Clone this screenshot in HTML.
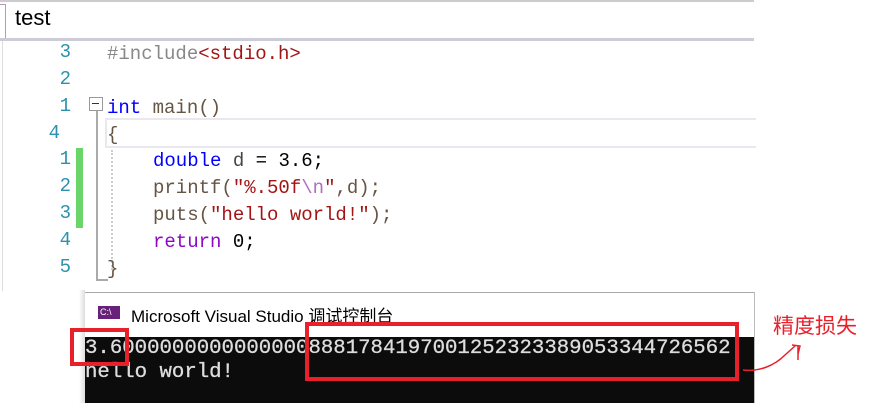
<!DOCTYPE html>
<html><head><meta charset="utf-8"><style>
body{margin:0;width:872px;height:403px;background:#fff;position:relative;overflow:hidden;font-family:"Liberation Mono","Noto Serif CJK SC",monospace}
.a{position:absolute;white-space:pre}
.code{font-size:19px;line-height:27px}
.ln{position:absolute;width:40px;text-align:right;left:31px;color:#2b91af;font-size:19px;font-family:"Liberation Mono",monospace}
</style></head><body>
<div class="a" style="left:0;top:0;width:754px;height:2px;background:#ccc"></div>
<div class="a" style="left:0;top:4px;width:5px;height:34px;border:1px solid #b89ab8;border-left:none"></div>
<div class="a" style="left:15px;top:5px;font:22px 'Liberation Sans',sans-serif;color:#000">test</div>
<div class="a" style="left:0;top:38px;width:754px;height:3px;background:#ccccd8"></div>
<div class="a" style="left:2px;top:41px;width:1px;height:250px;background:#ddd"></div>

<div class="ln" style="top:41px">3</div>
<div class="ln" style="top:68px">2</div>
<div class="ln" style="top:95px">1</div>
<div class="ln" style="top:122px;left:20px">4</div>
<div class="ln" style="top:148px">1</div>
<div class="ln" style="top:175px">2</div>
<div class="ln" style="top:202px">3</div>
<div class="ln" style="top:229px">4</div>
<div class="ln" style="top:256px">5</div>
<div class="a" style="left:76px;top:148px;width:7px;height:80px;background:#6ad66a"></div>
<div class="a" style="left:89px;top:97px;width:12px;height:12px;border:1px solid #999;background:#fff"></div>
<div class="a" style="left:92px;top:103px;width:7px;height:1px;background:#333"></div>
<div class="a" style="left:96px;top:111px;width:2px;height:170px;background:#aaa"></div>
<div class="a" style="left:96px;top:279px;width:12px;height:2px;background:#aaa"></div>
<div class="a" style="left:111px;top:150px;width:2px;height:120px;border-left:2px dotted #ccc"></div>
<div class="a" style="left:105px;top:118px;width:649px;height:26px;border:2px solid #e8e8ee;border-right:none"></div>

<div class="a code" style="left:107px;top:41px"><span style="color:#888">#include</span><span style="color:#a31515">&lt;stdio.h&gt;</span></div>
<div class="a code" style="left:107px;top:95px"><span style="color:#00f">int</span> <span style="color:#654">main()</span></div>
<div class="a code" style="left:107px;top:122px;color:#654">{</div>
<div class="a code" style="left:153px;top:148px"><span style="color:#00f">double</span> <span style="color:#444">d</span> = 3.6;</div>
<div class="a code" style="left:153px;top:175px;color:#654">printf(<span style="color:#a31515">"%.50f</span><span style="color:#b070c0">\n</span><span style="color:#a31515">"</span>,d);</div>
<div class="a code" style="left:153px;top:202px;color:#654">puts(<span style="color:#a31515">"hello world!"</span>);</div>
<div class="a code" style="left:153px;top:229px"><span style="color:#8f08c4">return</span> 0;</div>
<div class="a code" style="left:107px;top:256px;color:#654">}</div>

<div class="a" style="left:79px;top:290px;width:6px;height:113px;background:linear-gradient(to right,#fff,#ddd)"></div>
<div class="a" style="left:754px;top:292px;width:1px;height:111px;background:#bbb"></div>
<div class="a" style="left:85px;top:292px;width:669px;height:45px;background:#fff;border-top:1px solid #aaa"></div>
<div class="a" style="left:98px;top:306px;width:22px;height:13px;background:#68217a"></div>
<div class="a" style="left:100px;top:307px;font:9px 'Liberation Sans',sans-serif;color:#fff">C:\</div>
<div class="a" style="left:131px;top:302px;font:17px 'Liberation Sans','Noto Sans CJK SC',sans-serif;color:#000">Microsoft Visual Studio 调试控制台</div>
<div class="a" style="left:85px;top:337px;width:669px;height:66px;background:#0c0c0c"></div>
<div class="a" style="left:85px;top:337px;font-size:20.7px;line-height:24px;color:#ddd;-webkit-text-stroke:0.3px #ddd">3.60000000000000008881784197001252323389053344726562
hello world!</div>

<div class="a" style="left:70px;top:328px;width:51px;height:30px;border:4px solid #e8202a"></div>
<div class="a" style="left:305px;top:322px;width:426px;height:51px;border:4px solid #e8202a"></div>
<div class="a" style="left:773px;top:310px;font:21px 'Noto Sans CJK SC',sans-serif;color:#e8202a">精度损失</div>
<svg class="a" style="left:740px;top:340px" width="70" height="40"><path d="M3 30 C20 32 35 25 45 15 L55 6 M52 5 L60 6 L58 14 M58 6 L58 20" stroke="#e8202a" stroke-width="1.5" fill="none"/></svg>
</body></html>
